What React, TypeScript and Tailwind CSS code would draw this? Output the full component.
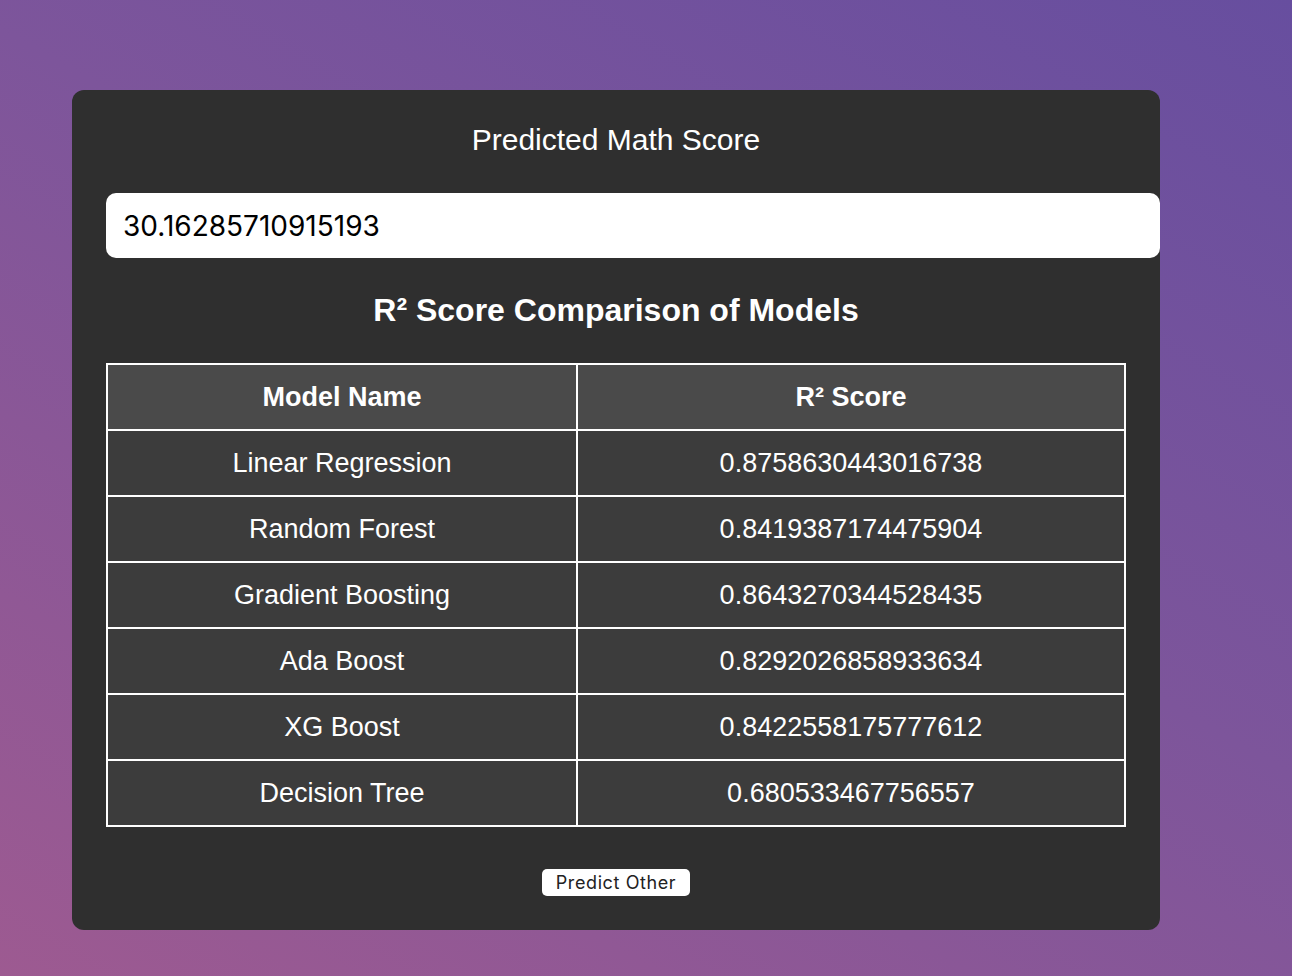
import React from 'react';

const models: [string, string][] = [
  ['Linear Regression', '0.8758630443016738'],
  ['Random Forest', '0.8419387174475904'],
  ['Gradient Boosting', '0.8643270344528435'],
  ['Ada Boost', '0.8292026858933634'],
  ['XG Boost', '0.8422558175777612'],
  ['Decision Tree', '0.680533467756557'],
];

export default function App() {
  return (
    <div className="min-h-[976px] w-full overflow-hidden bg-[linear-gradient(30deg,#9d5a91_0%,#7d559b_55%,#674e9f_100%)] pt-[90px] pl-[72px] font-['Liberation_Sans',Arial,sans-serif]">
      <div className="w-[1088px] h-[840px] rounded-[12px] bg-[#2f2f2f] px-[34px] pt-[32px] flex flex-col items-start">
        <h2 className="w-[1020px] text-center text-white text-[30px] leading-[36px]">
          Predicted Math Score
        </h2>
        <div className="mt-[35px] w-[1054px] h-[65px] rounded-[10px] bg-white pl-[17px] flex items-center text-black text-[28px] font-['Inter',sans-serif]">
          30.16285710915193
        </div>
        <h3 className="mt-[33px] w-[1020px] text-center text-white font-bold text-[32px] leading-[38px]">
          R² Score Comparison of Models
        </h3>
        <table className="mt-[34px] w-[1020px] border-collapse border-2 border-white text-white text-[27px]">
          <thead>
            <tr className="bg-[#4a4a4a] h-[66px]">
              <th className="w-[470px] border-2 border-white font-bold">Model Name</th>
              <th className="border-2 border-white font-bold">R² Score</th>
            </tr>
          </thead>
          <tbody>
            {models.map(([name, score]) => (
              <tr key={name} className="bg-[#3c3c3c] h-[66px]">
                <td className="border-2 border-white text-center">{name}</td>
                <td className="border-2 border-white text-center">{score}</td>
              </tr>
            ))}
          </tbody>
        </table>
        <div className="w-[1020px] flex justify-center mt-[42px]">
          <button
            type="button"
            className="w-[148px] h-[27px] rounded-[5px] bg-white text-[#222] text-[18px] tracking-[0.6px] font-['Inter',sans-serif] flex items-center justify-center"
          >
            Predict Other
          </button>
        </div>
      </div>
    </div>
  );
}
